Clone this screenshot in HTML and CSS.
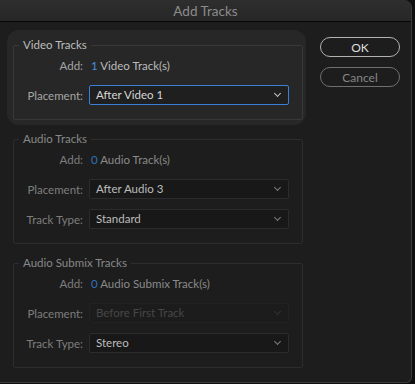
FILE: index.html
```html
<!DOCTYPE html>
<html lang="en">
<head>
    <meta charset="UTF-8">
    <title>Add Tracks</title>
    <link rel="stylesheet" href="styles.css">
</head>
<body>
    <div class="dialog">
        <div class="title-bar">Add Tracks</div>

        <div class="dialog-body">
            <div class="groups">
                <div class="focus-ring">
                    <fieldset class="group active">
                        <legend>Video Tracks</legend>
                        <div class="row add-row">
                            <span class="label">Add:</span>
                            <span class="value"><span class="count">1</span> Video Track(s)</span>
                        </div>
                        <div class="row">
                            <span class="label">Placement:</span>
                            <div class="select focused">After Video 1<span class="chevron"></span></div>
                        </div>
                    </fieldset>
                </div>

                <fieldset class="group">
                    <legend>Audio Tracks</legend>
                    <div class="row add-row">
                        <span class="label">Add:</span>
                        <span class="value"><span class="count">0</span> Audio Track(s)</span>
                    </div>
                    <div class="row">
                        <span class="label">Placement:</span>
                        <div class="select">After Audio 3<span class="chevron"></span></div>
                    </div>
                    <div class="row">
                        <span class="label">Track Type:</span>
                        <div class="select">Standard<span class="chevron"></span></div>
                    </div>
                </fieldset>

                <fieldset class="group">
                    <legend>Audio Submix Tracks</legend>
                    <div class="row add-row">
                        <span class="label">Add:</span>
                        <span class="value"><span class="count">0</span> Audio Submix Track(s)</span>
                    </div>
                    <div class="row">
                        <span class="label">Placement:</span>
                        <div class="select disabled">Before First Track<span class="chevron"></span></div>
                    </div>
                    <div class="row">
                        <span class="label">Track Type:</span>
                        <div class="select">Stereo<span class="chevron"></span></div>
                    </div>
                </fieldset>
            </div>

            <div class="buttons">
                <button class="btn primary">OK</button>
                <button class="btn">Cancel</button>
            </div>
        </div>
    </div>
</body>
</html>
```

FILE: styles.css
```css
body {
    margin: 0;
    background-color: #0e0e0e;
    font-family: Lato, "Open Sans", sans-serif;
    font-size: 11.5px;
}

.dialog {
    width: 411px;
    height: 382px;
    background-color: #1d1d1d;
    border-right: 1px solid #3a3a3a;
    border-bottom: 1px solid #3a3a3a;
    border-radius: 0 8px 6px 0;
    overflow: hidden;
}

.title-bar {
    height: 21px;
    line-height: 22px;
    text-align: center;
    font-size: 13.5px;
    color: #8c8c8c;
    background: linear-gradient(#2e2e2e, #272727);
    border-bottom: 1px solid #080808;
}

.dialog-body {
    display: flex;
}

.groups {
    width: 299px;
    padding: 8px 0 0 7px;
}

.focus-ring {
    background-color: #272727;
    border-radius: 12px;
    padding: 7px 3px 5px 6px;
    margin-bottom: 6px;
}

.group {
    width: 288px;
    margin: 0;
    padding: 0 0 9px 0;
    border: 1px solid #2d2d2d;
    border-radius: 2px;
}

.focus-ring .group {
    border-color: #383838;
}

.groups > .group {
    margin: 0 0 11px 6px;
}

legend {
    margin-left: 5px;
    padding: 0 4px;
    line-height: 16px;
    color: #888;
}

.active legend {
    color: #bdbdbd;
}

.row {
    display: flex;
    align-items: center;
    height: 30px;
}

.add-row {
    height: 24px;
    margin-bottom: 3px;
}

.label {
    width: 69px;
    text-align: right;
    margin-right: 6px;
    color: #7e7e7e;
}

.active .label {
    color: #a6a6a6;
}

.value {
    margin-left: 2px;
    color: #8a8a8a;
}

.active .value {
    color: #bcbcbc;
}

.count {
    color: #2f72bb;
}

.active .count {
    color: #4390e0;
}

.select {
    position: relative;
    box-sizing: border-box;
    width: 200px;
    height: 20px;
    line-height: 18px;
    padding-left: 6px;
    background-color: #181818;
    border: 1px solid #2c2c2c;
    border-radius: 2px;
    color: #bdbdbd;
}

.select.focused {
    background-color: #1f1f1f;
    border-color: #3c7fd8;
    color: #d6d6d6;
}

.select.disabled {
    background-color: #1c1c1c;
    border-color: #222;
    color: #474747;
}

.chevron {
    position: absolute;
    right: 8px;
    top: 5px;
    width: 4px;
    height: 4px;
    border-right: 1px solid #7c7c7c;
    border-bottom: 1px solid #7c7c7c;
    transform: rotate(45deg);
}

.focused .chevron {
    border-color: #c4c4c4;
}

.disabled .chevron {
    border-color: #333;
}

.buttons {
    display: flex;
    flex-direction: column;
    gap: 10px;
    padding: 15px 0 0 14px;
}

.btn {
    width: 80px;
    height: 20px;
    padding: 0;
    font-family: Lato, "Open Sans", sans-serif;
    font-size: 12px;
    background: transparent;
    border: 1px solid #6f6f6f;
    border-radius: 10px;
    color: #868686;
}

.btn.primary {
    border-color: #b2b2b2;
    color: #dedede;
}
```
